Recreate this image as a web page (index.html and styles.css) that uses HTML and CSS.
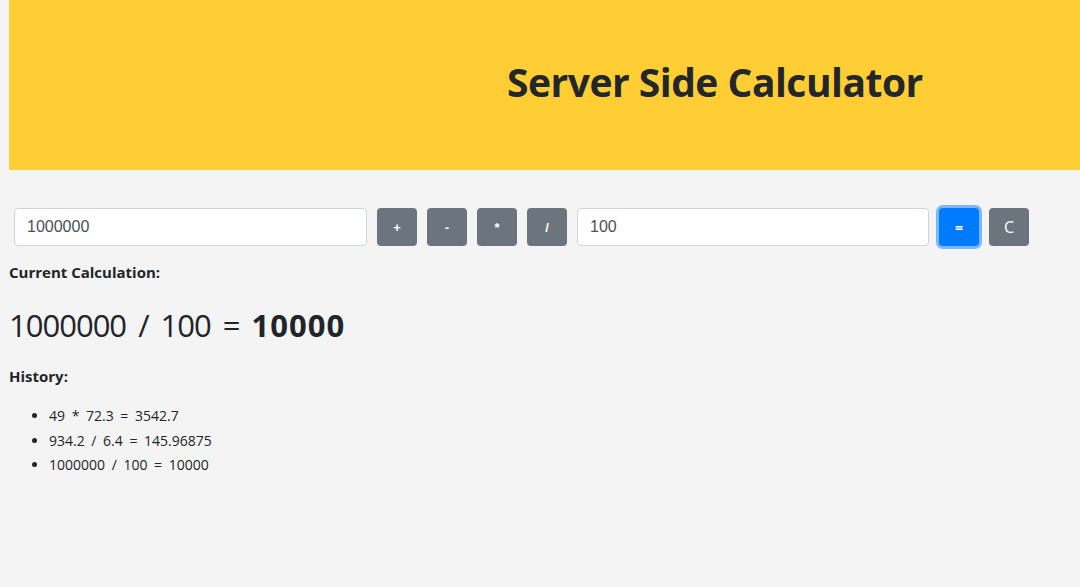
FILE: index.html
```html
<!DOCTYPE html>
<html>
<head>
<meta charset="utf-8">
<link rel="stylesheet" href="styles.css">
</head>
<body>
<div class="page">
  <header class="banner">
    <h1 class="title">Server Side Calculator</h1>
  </header>
  <div class="controls">
    <input class="field" type="text" value="1000000">
    <button class="btn btn-op">+</button>
    <button class="btn btn-op">-</button>
    <button class="btn btn-op">*</button>
    <button class="btn btn-op">/</button>
    <input class="field" type="text" value="100">
    <button class="btn btn-eq">=</button>
    <button class="btn btn-clear">C</button>
  </div>
  <h4 class="label">Current Calculation:</h4>
  <h2 class="result">1000000 / 100 = <b>10000</b></h2>
  <h4 class="label label-history">History:</h4>
  <ul class="history">
    <li>49 * 72.3 = 3542.7</li>
    <li>934.2 / 6.4 = 145.96875</li>
    <li>1000000 / 100 = 10000</li>
  </ul>
</div>
</body>
</html>
```
FILE: styles.css
```css
html, body {
  margin: 0;
  padding: 0;
  background: #f4f4f4;
  height: 100%;
}
body {
  font-family: "Open Sans", "DejaVu Sans", sans-serif;
  color: #212529;
}
.page {
  padding-left: 9px;
}
.banner {
  background: #ffce34;
  height: 170px;
  display: flex;
  align-items: center;
  padding-left: 498px;
  box-sizing: border-box;
  padding-bottom: 8px;
}
.title {
  margin: 0;
  font-size: 39px;
  font-weight: 700;
  color: #23262b;
  letter-spacing: -0.5px;
}
.controls {
  display: flex;
  gap: 10px;
  margin-top: 38px;
  padding-left: 5px;
  align-items: center;
}
.field {
  box-sizing: border-box;
  width: 353px;
  height: 38px;
  border: 1px solid #ced4da;
  border-radius: 4px;
  background: #fff;
  padding: 0 12px;
  font-family: "Liberation Sans", Arial, sans-serif;
  font-size: 16px;
  color: #495057;
  margin: 0;
}
.field:last-of-type { width: 352px; }
.btn {
  box-sizing: border-box;
  width: 40px;
  height: 38px;
  border: none;
  border-radius: 4px;
  color: #fff;
  font-family: "Liberation Sans", Arial, sans-serif;
  font-size: 13px;
  font-weight: 700;
  padding: 0;
  margin: 0;
}
.btn-op, .btn-clear { background: #6c757d; }
.btn-clear {
  font-family: "Open Sans", sans-serif;
  font-size: 16px;
  font-weight: 400;
}
.btn-eq {
  background: #007bff;
  box-shadow: 0 0 0 3px rgba(0, 123, 255, 0.5);
  font-family: "Open Sans", sans-serif;
  font-size: 14px;
}
.label {
  margin: 16px 0 0;
  font-size: 15px;
  font-weight: 700;
}
.result {
  margin: 22px 0 0;
  font-size: 31px;
  font-weight: 400;
  letter-spacing: -1px;
  word-spacing: 5px;
}
.result b {
  font-weight: 700;
  letter-spacing: 1px;
}
.label-history {
  margin-top: 20px;
}
.history {
  margin: 18px 0 0;
  padding-left: 40px;
  font-size: 14px;
  line-height: 24.5px;
  word-spacing: 3px;
}
```
